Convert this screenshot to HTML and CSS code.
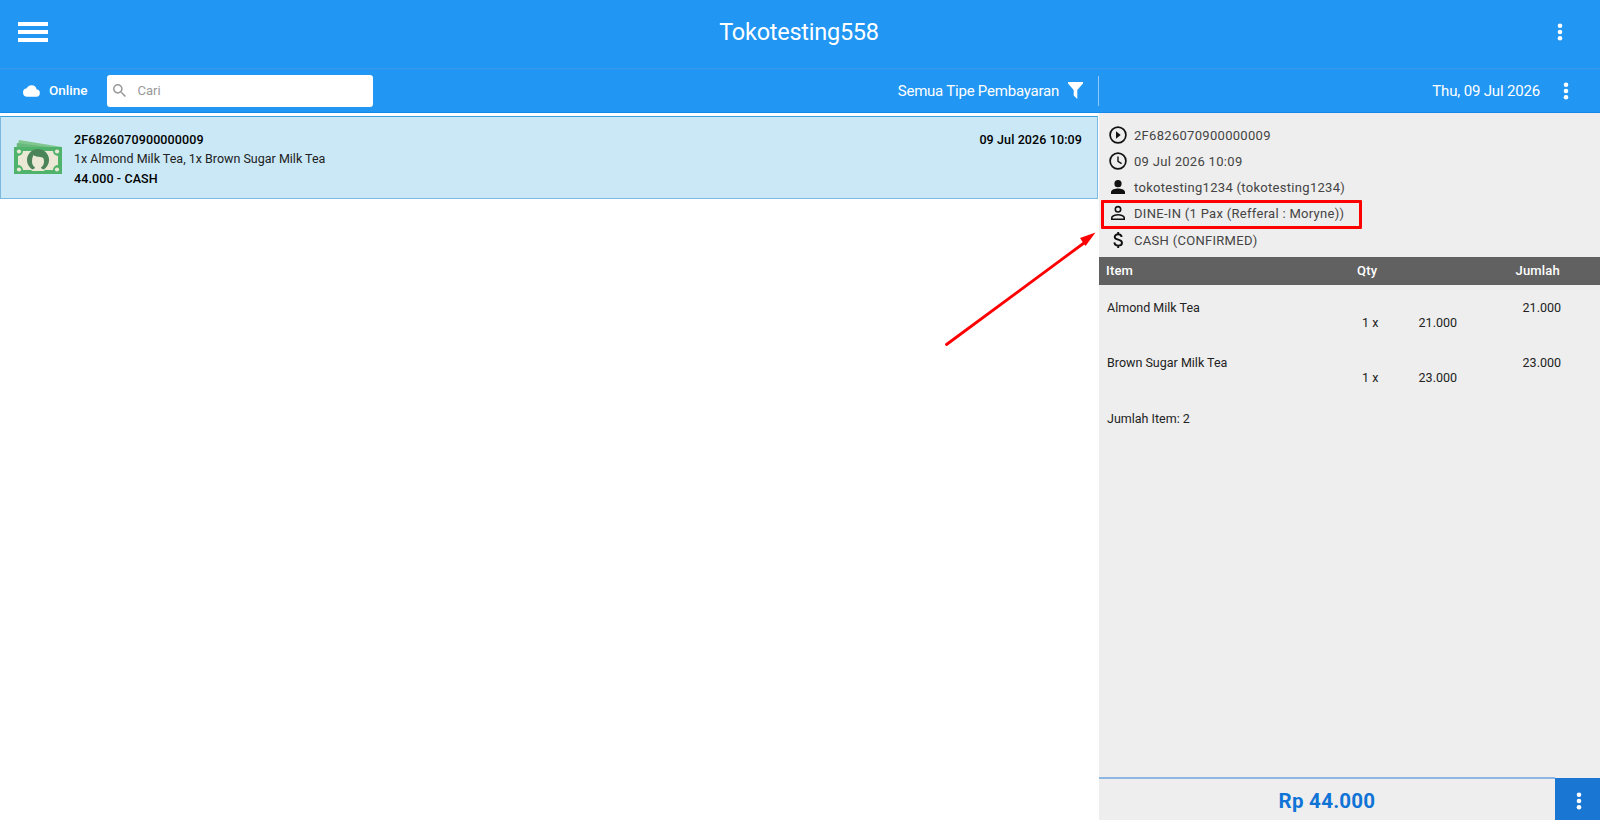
FILE: index.html
```html
<!DOCTYPE html>
<html lang="id">
<head>
    <meta charset="UTF-8">
    <meta name="viewport" content="width=device-width, initial-scale=1.0">
    <title>Tokotesting558</title>
    <link rel="stylesheet" href="styles.css">
</head>
<body>
    <header class="header">
        <svg class="menu-icon" width="30" height="20" viewBox="0 0 30 20"><path d="M0 0h30v4H0zM0 8h30v4H0zM0 16h30v4H0z" fill="#fff"/></svg>
        <h1 class="title">Tokotesting558</h1>
        <svg class="dots" width="6" height="18" viewBox="0 0 6 18"><circle cx="3" cy="2.7" r="2.3"/><circle cx="3" cy="9" r="2.3"/><circle cx="3" cy="15.3" r="2.3"/></svg>
    </header>

    <div class="toolbar">
        <div class="toolbar-left">
            <svg class="cloud" width="17" height="12" viewBox="0 0 24 16"><path d="M19.35 6.04A7.49 7.49 0 0 0 12 0C9.11 0 6.6 1.64 5.35 4.04A6 6 0 0 0 6 16h13a5 5 0 0 0 .35-9.96z" fill="#fff"/></svg>
            <span class="online">Online</span>
            <div class="search">
                <svg width="13" height="13" viewBox="3 3 17.5 17.5"><path d="M15.5 14h-.79l-.28-.27A6.47 6.47 0 0 0 16 9.5 6.5 6.5 0 1 0 9.5 16c1.61 0 3.09-.59 4.23-1.57l.27.28v.79l5 4.99L20.49 19l-4.99-5zm-6 0C7.01 14 5 11.99 5 9.5S7.01 5 9.5 5 14 7.01 14 9.5 11.99 14 9.5 14z" fill="#999"/></svg>
                <span>Cari</span>
            </div>
            <span class="filter-text">Semua Tipe Pembayaran</span>
            <svg class="filter" width="15" height="17" viewBox="0 0 15 17"><path d="M0 0h15v1.5L9.3 8v9L5.7 13.5V8L0 1.5z" fill="#fff"/></svg>
        </div>
        <div class="toolbar-right">
            <span class="date">Thu, 09 Jul 2026</span>
            <svg class="dots" width="6" height="18" viewBox="0 0 6 18"><circle cx="3" cy="2.7" r="2.3"/><circle cx="3" cy="9" r="2.3"/><circle cx="3" cy="15.3" r="2.3"/></svg>
        </div>
    </div>

    <main class="content">
        <section class="list">
            <div class="order">
                <svg class="money" width="48" height="34" viewBox="0 0 48 34">
                    <path d="M5 0l43 7v6H2z" fill="#7fc78f"/>
                    <path d="M3 3l40 5v5H2z" fill="#68b97b"/>
                    <path d="M0 7h48v27H0z" fill="#4fb36c"/>
                    <path d="M9 11h30a5 5 0 0 0 5 5v9a5 5 0 0 0-5 5H9a5 5 0 0 0-5-5v-9a5 5 0 0 0 5-5z" fill="#ebe9d6"/>
                    <circle cx="5" cy="11.500" r="2.100" fill="#ebe9d6"/><circle cx="43" cy="11.500" r="2.100" fill="#ebe9d6"/>
                    <circle cx="5" cy="29.500" r="2.100" fill="#ebe9d6"/><circle cx="43" cy="29.500" r="2.100" fill="#ebe9d6"/>
                    <circle cx="24" cy="20" r="11" fill="#4b8458"/>
                    <path d="M17.500 31c0-2 3-1.500 3.500-3.500-2-1.500-3-3.500-3-6 0-2.500.5-4.500 1.500-6.500 2 2 6 1.500 9 2.500 1.300 1 1.500 2.500 1.500 4 0 2.500-1 4.500-3 6 .5 2 3.500 1.500 3.500 3.500z" fill="#ebe9d6"/>
                </svg>
                <div class="order-info">
                    <div class="bold">2F6826070900000009</div>
                    <div class="order-items">1x Almond Milk Tea, 1x Brown Sugar Milk Tea</div>
                    <div class="bold">44.000 - CASH</div>
                </div>
                <div class="bold order-date">09 Jul 2026 10:09</div>
            </div>
        </section>

        <section class="detail">
            <div class="info">
                <div class="info-row">
                    <svg width="18" height="18" viewBox="0 0 18 18"><circle cx="9" cy="9" r="7.900" fill="none" stroke="#111" stroke-width="1.700"/><path d="M7 5.200v7.600L11.700 9z" fill="#111"/></svg>
                    <span>2F6826070900000009</span>
                </div>
                <div class="info-row">
                    <svg width="18" height="18" viewBox="0 0 18 18"><circle cx="9" cy="9" r="7.900" fill="none" stroke="#111" stroke-width="1.700"/><path d="M9 4.500V9.300l3.600 2.300" fill="none" stroke="#111" stroke-width="1.400"/></svg>
                    <span>09 Jul 2026 10:09</span>
                </div>
                <div class="info-row">
                    <svg width="18" height="18" viewBox="0 0 18 18"><circle cx="9" cy="5.700" r="3.600" fill="#111"/><path d="M2 16v-2c0-2.500 4.500-3.600 7-3.600s7 1.100 7 3.600v2z" fill="#111"/></svg>
                    <span>tokotesting1234 (tokotesting1234)</span>
                </div>
                <div class="info-row">
                    <svg width="18" height="18" viewBox="0 0 18 18"><g fill="none" stroke="#111" stroke-width="1.600"><circle cx="9" cy="5.300" r="2.700"/><path d="M2.800 15.200v-1.800c0-1.700 4-2.700 6.200-2.700s6.200 1 6.200 2.700v1.800z"/></g></svg>
                    <span>DINE-IN (1 Pax (Refferal : Moryne))</span>
                    <div class="highlight"></div>
                </div>
                <div class="info-row last">
                    <svg width="18" height="18" viewBox="0 0 18 18"><path d="M12.600 6c-.2-1.800-1.600-2.700-3.400-2.700-2 0-3.500 1-3.500 2.600 0 3.600 7.300 2 7.300 5.800 0 1.800-1.600 2.900-3.700 2.900-2.200 0-3.800-1-3.900-3.200M9.200 1v2.500M9.200 14.500V17" fill="none" stroke="#111" stroke-width="1.900"/></svg>
                    <span>CASH (CONFIRMED)</span>
                </div>
            </div>

            <div class="table-head">
                <span>Item</span><span>Qty</span><span class="right">Jumlah</span>
            </div>
            <div class="item">
                <div class="item-top"><span>Almond Milk Tea</span><span>21.000</span></div>
                <div class="item-qty"><span>1 x</span><span>21.000</span></div>
            </div>
            <div class="item">
                <div class="item-top"><span>Brown Sugar Milk Tea</span><span>23.000</span></div>
                <div class="item-qty"><span>1 x</span><span>23.000</span></div>
            </div>
            <div class="count">Jumlah Item: 2</div>

            <div class="total">
                <div class="total-value">Rp 44.000</div>
                <div class="total-more">
                    <svg class="dots" width="6" height="18" viewBox="0 0 6 18"><circle cx="3" cy="2.7" r="2.3"/><circle cx="3" cy="9" r="2.3"/><circle cx="3" cy="15.3" r="2.3"/></svg>
                </div>
            </div>
        </section>
    </main>

    <!-- arrow pointing at the dine-in row -->
    <svg class="arrow" width="160" height="120" viewBox="0 0 160 120">
        <path d="M7.500 114.500L147 11.500" stroke="#f00" stroke-width="2.800" stroke-linecap="round"/>
        <path d="M156.500 2.500L146.500 16l-2.500-3.500-3-4.500z" fill="#f00"/>
    </svg>
</body>
</html>
```
FILE: styles.css
```css
* {
    box-sizing: border-box;
}
body {
    margin: 0;
    height: 820px;
    display: flex;
    flex-direction: column;
    overflow: hidden;
    font-family: Roboto, sans-serif;
    font-size: 13px;
    color: #222;
    background: #fff;
}
svg {
    display: block;
    flex-shrink: 0;
}
.dots {
    fill: #fff;
}
.header {
    height: 68px;
    flex-shrink: 0;
    display: flex;
    align-items: center;
    justify-content: space-between;
    padding: 0 37px 4px 18px;
    background: #2196f3;
}
.title {
    margin: 0 7px 0 0;
    font-size: 23.5px;
    font-weight: 400;
    letter-spacing: -0.25px;
    color: #fff;
}
.toolbar {
    height: 45px;
    flex-shrink: 0;
    display: flex;
    align-items: center;
    background: #2196f3;
    border-top: 1px solid #3a99e8;
    border-bottom: 1px solid #1388ec;
    color: #fff;
    font-size: 15px;
}
.toolbar-left {
    width: 1099px;
    height: 30px;
    display: flex;
    align-items: center;
    padding: 0 15px 0 23px;
    border-right: 1px solid #8ec8f8;
}
.online {
    margin: 0 20px 1px 9px;
    font-size: 13.5px;
    font-weight: 500;
}
.search {
    width: 266px;
    height: 32px;
    display: flex;
    align-items: center;
    gap: 11px;
    padding-left: 6px;
    border-radius: 3px;
    background: #fff;
    color: #999;
    font-size: 13px;
}
.filter-text {
    margin-left: auto;
    letter-spacing: -0.22px;
}
.filter {
    margin-left: 9px;
}
.toolbar-right {
    flex: 1;
    display: flex;
    align-items: center;
    justify-content: flex-end;
    padding-right: 31px;
}
.date {
    margin-right: 23px;
    letter-spacing: -0.17px;
}
.content {
    flex: 1;
    display: flex;
}
.list {
    width: 1099px;
    padding: 3px 1px 0 0;
}
.order {
    height: 83px;
    display: flex;
    padding: 13px 15px 0 13px;
    background: #cae8f6;
    border: 1px solid #79b9e2;
    border-top-color: #3ca0e0;
}
.money {
    margin-top: 10px;
}
.order-info {
    margin-left: 12px;
    line-height: 19.4px;
    font-size: 12.5px;
}
.bold {
    font-weight: 500;
    letter-spacing: 0.11px;
    color: #000;
}
.order-date {
    margin-left: auto;
    line-height: 19.4px;
    font-size: 12.5px;
}
.detail {
    flex: 1;
    display: flex;
    flex-direction: column;
    background: #eee;
}
.info {
    height: 144px;
    padding: 9px 0 0 10px;
    font-size: 13px;
    letter-spacing: 0.3px;
    color: #444;
}
.info-row {
    position: relative;
    height: 26px;
    display: flex;
    align-items: center;
    gap: 7px;
}
.info-row.last {
    margin-top: 1px;
}
.highlight {
    position: absolute;
    left: -8px;
    top: 0;
    width: 261px;
    height: 29px;
    border: 3px solid #f00;
    border-radius: 1px;
}
.table-head {
    height: 28px;
    display: grid;
    grid-template-columns: 251px 100px 1fr;
    align-items: center;
    padding: 0 40px 1px 7px;
    background: #616161;
    color: #fff;
    font-weight: 500;
    letter-spacing: 0.2px;
}
.right {
    text-align: right;
}
.item {
    height: 55px;
    padding: 15px 39px 0 8px;
    line-height: 15px;
    font-size: 12.5px;
}
.item-top {
    display: flex;
    justify-content: space-between;
}
.item-qty {
    display: flex;
    justify-content: space-between;
    width: 350px;
    padding-left: 255px;
}
.count {
    padding: 16px 8px;
    line-height: 15px;
    font-size: 12.5px;
}
.total {
    height: 43px;
    margin-top: auto;
    display: flex;
}
.total-value {
    flex: 1;
    display: flex;
    align-items: center;
    justify-content: center;
    padding-top: 2px;
    border-top: 2px solid #8fb5e3;
    color: #1073d6;
    font-size: 20.5px;
    font-weight: 700;
    letter-spacing: 0.25px;
}
.total-more {
    width: 45px;
    display: flex;
    align-items: center;
    justify-content: center;
    margin-top: 1px;
    padding: 4px 0 0 2px;
    background: #1976d2;
}
.arrow {
    position: absolute;
    left: 939px;
    top: 230px;
}
```
